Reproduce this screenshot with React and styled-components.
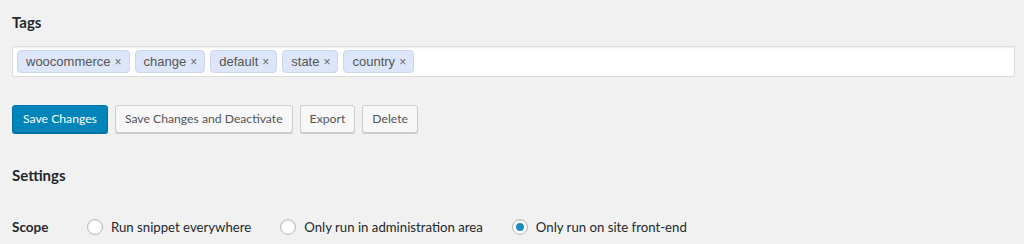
import React from 'react';
import styled, { createGlobalStyle } from 'styled-components';

const GlobalStyle = createGlobalStyle`
  html, body {
    margin: 0;
    background: #f1f1f1;
  }
  body {
    font-family: Lato, "Noto Sans", sans-serif;
    font-size: 13px;
    color: #23282d;
  }
`

const Wrap = styled.div`
  padding: 0 9px 0 12px;
`

const Heading = styled.h2`
  margin: 0;
  padding-top: ${(p) => p.$top}px;
  font-size: 15px;
  font-weight: 700;
  line-height: 20px;
  color: #23282d;
`

const TagBox = styled.div`
  margin-top: 14px;
  display: flex;
  flex-wrap: wrap;
  gap: 5px;
  align-items: center;
  height: 31px;
  box-sizing: border-box;
  padding: 0 4px;
  background: #fff;
  border: 1px solid #ddd;
  border-radius: 2px;
  box-shadow: inset 0 1px 2px rgba(0, 0, 0, 0.07);
`

const Tag = styled.span`
  display: inline-flex;
  align-items: center;
  height: 23px;
  box-sizing: border-box;
  padding: 0 7px 0 8px;
  background: #dde6f8;
  border: 1px solid #cad6ef;
  border-radius: 4px;
  font-family: "Liberation Sans", Arial, sans-serif;
  font-size: 13px;
  color: #555;
`

const Remove = styled.span`
  margin-left: 4px;
  font-size: 12px;
  color: #666;
`

const Buttons = styled.div`
  display: flex;
  gap: 7px;
  margin-top: 28px;
`

const Button = styled.button`
  height: 28px;
  padding: 0 ${(p) => (p.$primary ? 10 : 9)}px 1px;
  font-family: inherit;
  font-size: 12.2px;
  line-height: 26px;
  border-radius: 3px;
  border: 1px solid ${(p) => (p.$primary ? '#0073aa' : '#ccc')};
  background: ${(p) => (p.$primary ? '#0085ba' : '#f7f7f7')};
  color: ${(p) => (p.$primary ? '#fff' : '#555')};
  box-shadow: ${(p) => (p.$primary ? '0 1px 0 #0073aa' : '0 1px 0 #ccc')};
  cursor: pointer;
`

const Row = styled.div`
  display: flex;
  align-items: center;
  margin-top: 34px;
`

const RowLabel = styled.div`
  width: 75px;
  font-weight: 700;
  font-size: 13.5px;
`

const Option = styled.label`
  display: flex;
  align-items: center;
  gap: 8px;
  margin-right: 29px;
  font-size: 13.2px;
`

const Radio = styled.span`
  width: 16px;
  height: 16px;
  box-sizing: border-box;
  border-radius: 50%;
  border: 1px solid #b4b9be;
  background: #fff;
  box-shadow: inset 0 1px 2px rgba(0, 0, 0, 0.1);
  display: flex;
  align-items: center;
  justify-content: center;
  &::after {
    content: '';
    width: 8px;
    height: 8px;
    border-radius: 50%;
    background: #1e8cbe;
    display: ${(p) => (p.$checked ? 'block' : 'none')};
  }
`

const tags = ['woocommerce', 'change', 'default', 'state', 'country'];
const scopes = [
  { label: 'Run snippet everywhere', checked: false },
  { label: 'Only run in administration area', checked: false },
  { label: 'Only run on site front-end', checked: true },
];

const App = () => (
  <Wrap>
    <GlobalStyle />
    <Heading $top={12}>Tags</Heading>
    <TagBox>
      {tags.map((t) => (
        <Tag key={t}>
          {t}
          <Remove>×</Remove>
        </Tag>
      ))}
    </TagBox>
    <Buttons>
      <Button $primary>Save Changes</Button>
      <Button>Save Changes and Deactivate</Button>
      <Button>Export</Button>
      <Button>Delete</Button>
    </Buttons>
    <Heading $top={32}>Settings</Heading>
    <Row>
      <RowLabel>Scope</RowLabel>
      {scopes.map((s) => (
        <Option key={s.label}>
          <Radio $checked={s.checked} />
          {s.label}
        </Option>
      ))}
    </Row>
  </Wrap>
);

export default App;
